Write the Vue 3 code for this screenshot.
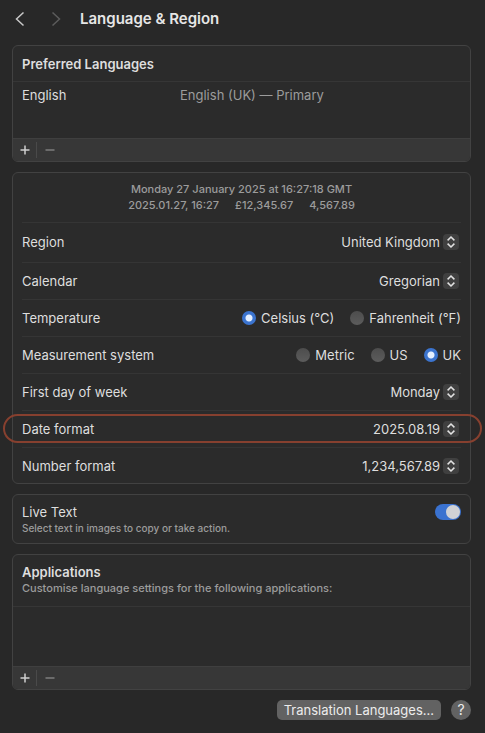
<script setup>
import { ref } from 'vue'

const temperature = ref('Celsius (°C)')
const measurement = ref('UK')
const liveText = ref(true)

const topRows = [
  { id: 'region', label: 'Region', value: 'United Kingdom', tall: true },
  { id: 'calendar', label: 'Calendar', value: 'Gregorian' },
]
const bottomRows = [
  { id: 'first-day', label: 'First day of week', value: 'Monday' },
  { id: 'date-format', label: 'Date format', value: '2025.08.19', marked: true },
  { id: 'number-format', label: 'Number format', value: '1,234,567.89' },
]
const temperatures = ['Celsius (°C)', 'Fahrenheit (°F)']
const systems = ['Metric', 'US', 'UK']
</script>

<template>
  <main class="window">
    <header class="titlebar">
      <button class="nav" type="button" aria-label="Back">
        <svg width="10" height="16" viewBox="0 0 10 16"><path d="M8.5 1.5 1.5 8l7 6.5" /></svg>
      </button>
      <button class="nav dim" type="button" aria-label="Forward" disabled>
        <svg width="10" height="16" viewBox="0 0 10 16"><path d="M1.5 1.5 8.5 8l-7 6.5" /></svg>
      </button>
      <h1>Language &amp; Region</h1>
    </header>

    <section class="panel">
      <h2 class="head">Preferred Languages</h2>
      <div class="list languages">
        <span>English</span>
        <span class="muted">English (UK) — Primary</span>
      </div>
      <div class="tools">
        <button type="button" aria-label="Add language">
          <svg width="10" height="10" viewBox="0 0 10 10"><path d="M5 .5v9M.5 5h9" /></svg>
        </button>
        <button class="remove" type="button" aria-label="Remove language" disabled>
          <svg width="10" height="10" viewBox="0 0 10 10"><path d="M.5 5h9" /></svg>
        </button>
      </div>
    </section>

    <section class="panel form">
      <div class="preview">
        <div>Monday 27 January 2025 at 16:27:18 GMT</div>
        <div class="samples">
          <span>2025.01.27, 16:27</span><span>£12,345.67</span><span>4,567.89</span>
        </div>
      </div>
      <div v-for="row in topRows" :key="row.id" class="row" :class="{ tall: row.tall }">
        <label :for="row.id">{{ row.label }}</label>
        <div class="picker">
          <select :id="row.id"><option>{{ row.value }}</option></select>
          <svg class="stepper" width="16" height="16" viewBox="0 0 16 16" aria-hidden="true">
            <path d="M4.6 6.4 8 3l3.4 3.4M4.6 9.6 8 13l3.4-3.4" />
          </svg>
        </div>
      </div>
      <div class="row" role="radiogroup" aria-label="Temperature">
        <span>Temperature</span>
        <div class="choices">
          <label v-for="t in temperatures" :key="t">
            <input v-model="temperature" type="radio" name="temperature" :value="t" />{{ t }}
          </label>
        </div>
      </div>
      <div class="row" role="radiogroup" aria-label="Measurement system">
        <span>Measurement system</span>
        <div class="choices">
          <label v-for="s in systems" :key="s">
            <input v-model="measurement" type="radio" name="measurement" :value="s" />{{ s }}
          </label>
        </div>
      </div>
      <div v-for="row in bottomRows" :key="row.id" class="row" :class="{ marked: row.marked }">
        <label :for="row.id">{{ row.label }}</label>
        <div class="picker">
          <select :id="row.id"><option>{{ row.value }}</option></select>
          <svg class="stepper" width="16" height="16" viewBox="0 0 16 16" aria-hidden="true">
            <path d="M4.6 6.4 8 3l3.4 3.4M4.6 9.6 8 13l3.4-3.4" />
          </svg>
        </div>
      </div>
    </section>

    <section class="panel live">
      <div>
        <label for="live-text">Live Text</label>
        <p class="note small">Select text in images to copy or take action.</p>
      </div>
      <input id="live-text" v-model="liveText" class="switch" type="checkbox" />
    </section>

    <section class="panel">
      <div class="head apps">
        <h2>Applications</h2>
        <p class="note">Customise language settings for the following applications:</p>
      </div>
      <div class="list"></div>
      <div class="tools">
        <button type="button" aria-label="Add application">
          <svg width="10" height="10" viewBox="0 0 10 10"><path d="M5 .5v9M.5 5h9" /></svg>
        </button>
        <button class="remove" type="button" aria-label="Remove application" disabled>
          <svg width="10" height="10" viewBox="0 0 10 10"><path d="M.5 5h9" /></svg>
        </button>
      </div>
    </section>

    <footer class="actions">
      <button class="translate" type="button">Translation Languages...</button>
      <button class="help" type="button" aria-label="Help">?</button>
    </footer>
  </main>
</template>

<style>
body {
  margin: 0;
  background: #282828;
}
</style>

<style scoped>
.window {
  box-sizing: border-box;
  min-height: 100vh;
  padding: 0 14px 12px 12px;
  display: flex;
  flex-direction: column;
  gap: 10px;
  background: #282828;
  color: #dedede;
  font: 13px/18px Inter, "Liberation Sans", sans-serif;
}
h1, h2, p { margin: 0; }
button, select {
  font: inherit;
  color: inherit;
  border: 0;
  padding: 0;
  background: none;
}
svg {
  display: block;
  fill: none;
  stroke: currentColor;
  stroke-width: 1.5;
}
.titlebar {
  display: flex;
  align-items: center;
  height: 35px;
  padding-top: 2px;
  box-sizing: border-box;
}
.titlebar h1 {
  font-size: 15px;
  line-height: 20px;
  font-weight: 600;
  margin-left: 16px;
  color: #e6e6e6;
}
.nav { width: 16px; display: grid; place-items: center; color: #c8c8c8; }
.nav + .nav { margin-left: 20px; }
.nav.dim { color: #5c5c5c; }

.panel {
  border: 1px solid #424242;
  border-radius: 6px;
  background: #2b2b2b;
}
h2 { font-size: 13px; line-height: 18px; font-weight: 600; }
.head {
  padding: 9px 9px 8px;
  border-bottom: 1px solid #363636;
}
.head.apps { padding: 8px 9px 10px; }
.note { font-size: 11px; line-height: 15px; font-weight: 500; color: #9c9c9c; }
.note.small { font-size: 10px; }
.muted { color: #9c9c9c; }
.list { min-height: 59px; }
.languages {
  display: grid;
  grid-template-columns: 158px 1fr;
  box-sizing: border-box;
  min-height: 56px;
  padding: 4px 9px;
}
.tools {
  display: flex;
  align-items: center;
  height: 22px;
  border-top: 1px solid #3f3f3f;
  border-radius: 0 0 5px 5px;
  background: #373737;
}
.tools button {
  width: 23px;
  height: 16px;
  display: grid;
  place-items: center;
  color: #d0d0d0;
}
.tools .remove { width: 26px; color: #7e7e7e; border-left: 1px solid #4a4a4a; }

.form { padding: 0 9px; }
.preview {
  padding: 8px 0 9px;
  text-align: center;
  font-size: 11px;
  line-height: 16px;
  font-weight: 500;
  color: #9c9c9c;
}
.samples { display: flex; justify-content: center; gap: 16px; }
.row {
  position: relative;
  display: flex;
  align-items: center;
  justify-content: space-between;
  height: 36px;
  border-top: 1px solid #353535;
}
.row.tall { height: 37px; padding-bottom: 2px; }
.row:last-child { height: 35px; }
.row.marked::after {
  content: "";
  position: absolute;
  inset: 3px -21px 4px -19px;
  border: 2px solid #87402f;
  border-radius: 15px;
  pointer-events: none;
}
.picker { display: grid; align-items: center; margin-right: 2px; }
.picker select {
  grid-area: 1 / 1;
  appearance: none;
  padding-right: 19px;
  outline: 0;
  text-align-last: right;
}
.stepper {
  grid-area: 1 / 1;
  justify-self: end;
  border-radius: 4px;
  background: #404040;
  color: #e2e2e2;
  pointer-events: none;
}
.choices { display: flex; gap: 16px; }
.choices label { display: flex; align-items: center; gap: 5px; }
.choices input {
  appearance: none;
  width: 14px;
  height: 14px;
  margin: 0;
  border-radius: 50%;
  background: linear-gradient(#4d4d4d, #5c5c5c);
}
.choices input:checked {
  background: radial-gradient(circle, #e4efff 0 2px, #e4efff 3px, #3b74cf 4px);
}
.live {
  display: flex;
  justify-content: space-between;
  align-items: flex-start;
  padding: 8px 9px 7px;
}
.live label { display: block; }
.switch {
  appearance: none;
  display: flex;
  justify-content: flex-end;
  box-sizing: border-box;
  width: 26px;
  height: 16px;
  margin: 1px 0 0;
  padding: 1px;
  border-radius: 8px;
  background: #3a72d0;
}
.switch::before {
  content: "";
  width: 14px;
  height: 14px;
  border-radius: 50%;
  background: #d0d2d6;
}
.switch:not(:checked) { justify-content: flex-start; background: #555; }
.actions { display: flex; justify-content: flex-end; gap: 10px; }
.translate {
  padding: 0 7px;
  height: 20px;
  line-height: 20px;
  border-radius: 5px;
  background: #626262;
  color: #ececec;
}
.help {
  width: 20px;
  height: 20px;
  font-size: 14px;
  line-height: 20px;
  border-radius: 50%;
  background: #626262;
  color: #ececec;
}
</style>
